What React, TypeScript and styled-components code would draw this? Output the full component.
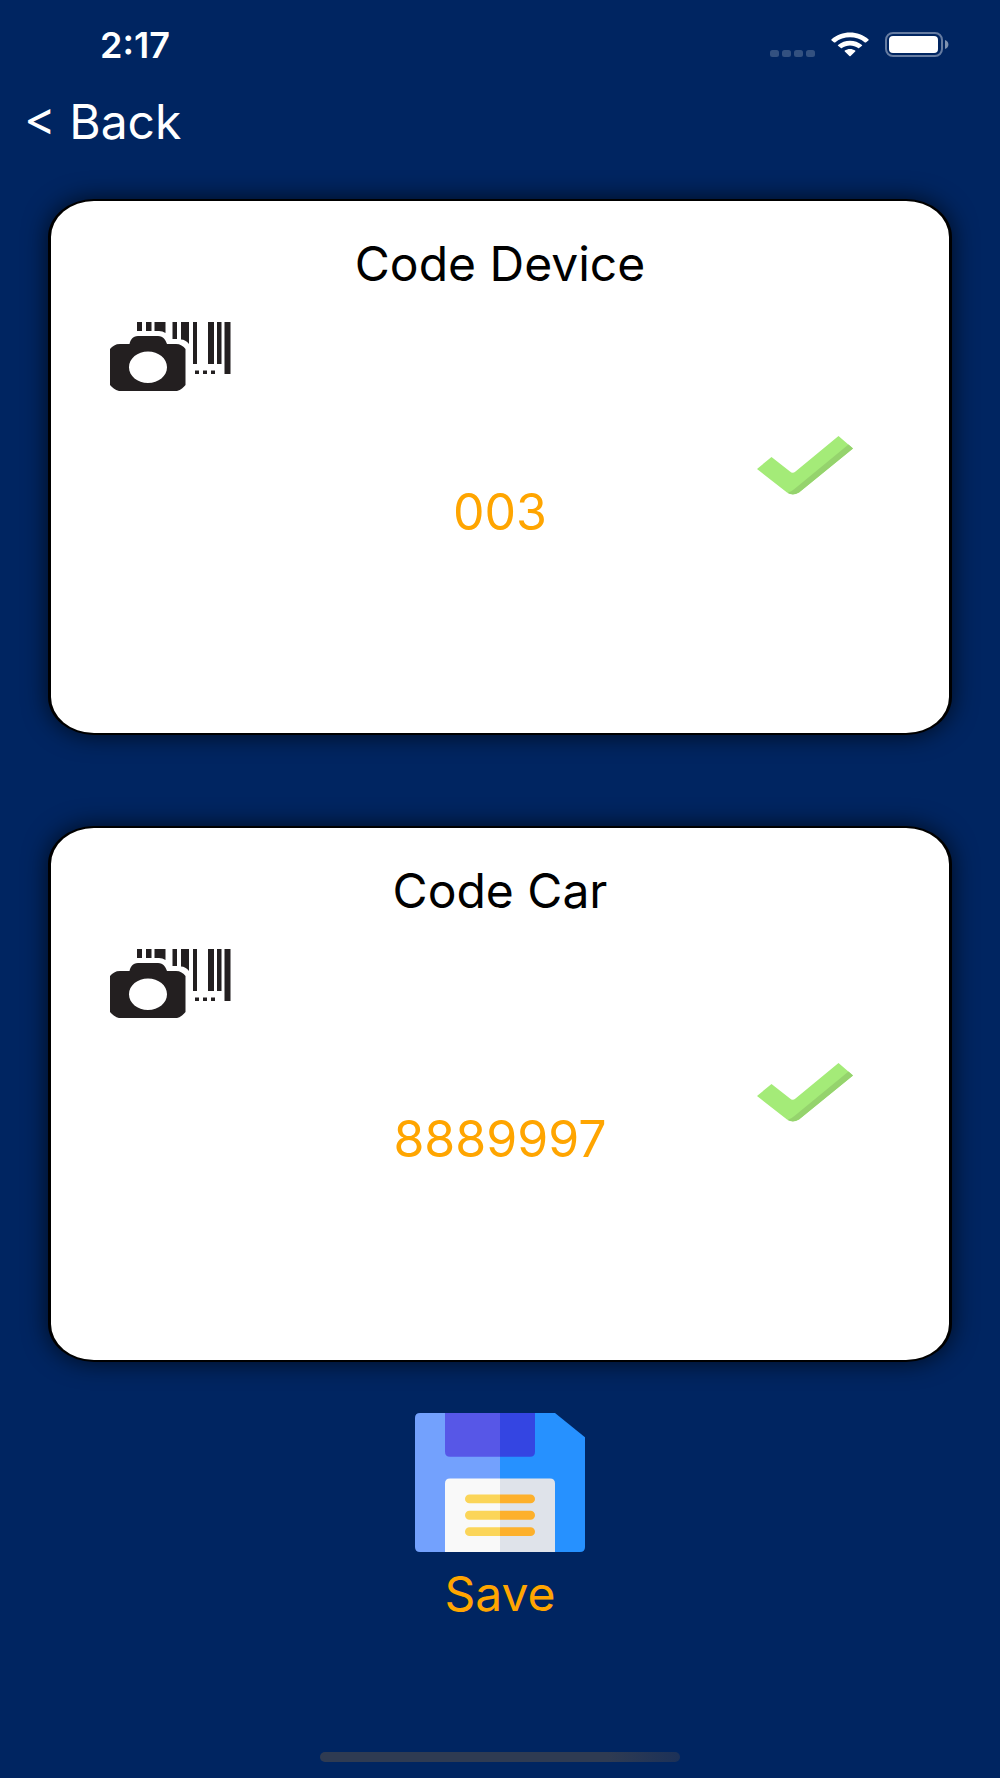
import React from "react";
import styled, { createGlobalStyle } from "styled-components";

export default function App() {
  return (
    <>
      <GlobalStyle />
      <Screen>
        <StatusBar>
          <Clock>2:17</Clock>
          <StatusIcons>
            <SignalIcon />
            <WifiIcon />
            <BatteryIcon />
          </StatusIcons>
        </StatusBar>
        <Header>
          <BackButton type="button">&lt; Back</BackButton>
        </Header>
        <Cards>
          <CodeCard title="Code Device" value="003" />
          <CodeCard title="Code Car" value="8889997" />
        </Cards>
        <SaveButton type="button">
          <SaveIcon />
          Save
        </SaveButton>
        <HomeIndicator />
      </Screen>
    </>
  );
}

function CodeCard({ title, value }: { title: string; value: string }) {
  return (
    <Card>
      <CardTitle>{title}</CardTitle>
      <ScanButton type="button" aria-label={`Scan ${title}`}>
        <ScanIcon />
      </ScanButton>
      <ResultRow>
        <CodeValue>{value}</CodeValue>
        <CheckIcon />
      </ResultRow>
    </Card>
  );
}

function SignalIcon() {
  return (
    <svg width="45" height="25" viewBox="0 0 45 25" fill="#335180">
      <rect x="0" y="18" width="9" height="7" rx="2.5" />
      <rect x="12" y="18" width="9" height="7" rx="2.5" />
      <rect x="24" y="18" width="9" height="7" rx="2.5" />
      <rect x="36" y="18" width="9" height="7" rx="2.5" />
    </svg>
  );
}

function WifiIcon() {
  return (
    <svg width="38" height="25" viewBox="0 0 38 25" fill="#fff">
      <path d="M0.4 7.4C10.5-1.9 27.5-1.9 37.6 7.4Q38 7.8 37.6 8.2L34.9 10.4Q34.4 10.8 33.9 10.4C25.5 3.600 12.5 3.600 4.1 10.4Q3.6 10.8 3.1 10.4L0.4 8.2Q0 7.8 0.4 7.4Z" />
      <path d="M7 13C13.5 7.2 24.5 7.2 31 13Q31.4 13.4 31 13.8L28.1 16.1Q27.6 16.5 27.1 16.1C22.5 12.600 15.5 12.600 10.9 16.1Q10.4 16.5 9.9 16.1L7 13.8Q6.6 13.4 7 13Z" />
      <path d="M13.8 18.6C16.8 16.4 21.2 16.4 24.2 18.6Q24.7 19 24.2 19.4L19.6 23.9Q19 24.4 18.4 23.9L13.8 19.4Q13.3 19 13.8 18.6Z" />
    </svg>
  );
}

function BatteryIcon() {
  return (
    <svg width="64" height="25" viewBox="0 0 64 25">
      <rect x="1" y="1" width="56" height="23" rx="7" fill="none" stroke="#667ca1" strokeWidth="2" />
      <rect x="4" y="4" width="49" height="17" rx="4" fill="#fff" />
      <path d="M60 8C64.5 9.5 64.5 15.5 60 17Z" fill="#7f92b0" />
    </svg>
  );
}

function ScanIcon() {
  return (
    <svg width="121" height="70" viewBox="0 0 121 70" fill="#231f20">
      <path d="M27 0H32V9H27ZM36 0H41.5V9H36ZM44.5 0H55.5V11Q52.5 9 49 9H44.5ZM62.5 0H67V17H62.5ZM71 0H79V22Q75.5 17.5 71 17.5ZM83 0H87V42H83ZM98 0H104V42H98ZM107 0H111.5V42H107ZM114.5 0H120.5V52H114.5Z" />
      <path d="M85 48.5H89V52H85ZM93 48.5H97V52H93ZM101 48.5H105V52H101Z" />
      <path
        fillRule="evenodd"
        d="M19.5 22C20.5 18 22.5 14 28 14H48C53.5 14 55.500 18 57 22H66C70 22 73.500 24 75.500 27V63C73.500 65.500 71 68 67 69H9C5 68 2 65.500 0 63V27C2.500 24 5.500 22 10 22ZM38 29.500C27.500 29.500 19 36.500 19 45.200S27.500 61 38 61 57 54 57 45.200 48.500 29.500 38 29.500Z"
      />
    </svg>
  );
}

function CheckIcon() {
  return (
    <svg width="96" height="59" viewBox="0 0 96 59" role="img" aria-label="Scanned">
      <path
        fill="#a4eb78"
        d="M0 33L14.5 21L33 35.5Q35.5 38 38.5 35.5L81.5 0L96 12.5L42 56.5Q36 60 30 56.5Z"
      />
      <path fill="#95d36d" d="M91.5 8.5L96 12.5L42 56.5Q36 60 30.5 57Q34 56 38 52.5Z" />
    </svg>
  );
}

function SaveIcon() {
  return (
    <svg width="170" height="139" viewBox="0 0 170 140" preserveAspectRatio="none">
      <path fill="#73a1fd" d="M5 0H85V140H5Q0 140 0 135V5Q0 0 5 0Z" />
      <path fill="#2691ff" d="M85 0H140L170 24.5V135Q170 140 165 140H85Z" />
      <path fill="#5757e7" d="M30 0H85V44H35Q30 44 30 39Z" />
      <path fill="#3445e2" d="M85 0H120V39Q120 44 115 44H85Z" />
      <path fill="#f9f9f9" d="M35 66H85V140H30V71Q30 66 35 66Z" />
      <path fill="#dfe3ea" d="M85 66H135Q140 66 140 71V140H85Z" />
      <path
        fill="#fbd559"
        d="M85 82V91H54.5A4.5 4.5 0 0 1 54.5 82ZM85 98.5V107.5H54.5A4.5 4.5 0 0 1 54.5 98.5ZM85 115V124H54.5A4.5 4.5 0 0 1 54.5 115Z"
      />
      <path
        fill="#fdb02b"
        d="M85 82H115.5A4.5 4.5 0 0 1 115.5 91H85ZM85 98.5H115.5A4.5 4.5 0 0 1 115.5 107.5H85ZM85 115H115.5A4.5 4.5 0 0 1 115.5 124H85Z"
      />
    </svg>
  );
}

const GlobalStyle = createGlobalStyle`
  * {
    box-sizing: border-box;
  }
  body {
    margin: 0;
    background: #002561;
    font-family: Inter, "Liberation Sans", sans-serif;
  }
  svg {
    display: block;
  }
`;

const Screen = styled.div`
  display: flex;
  flex-direction: column;
  min-height: 100vh;
  padding-bottom: 16px;
`;

const StatusBar = styled.div`
  display: flex;
  align-items: center;
  justify-content: space-between;
  height: 89px;
  padding: 0 51px 0 100px;
`;

const Clock = styled.span`
  color: #fff;
  font-size: 36px;
  font-weight: 600;
  line-height: 40px;
`;

const StatusIcons = styled.div`
  display: flex;
  gap: 16px;
`;

const Header = styled.header`
  padding: 5px 24px 49px;
`;

const PlainButton = styled.button`
  padding: 0;
  border: 0;
  background: none;
  font-family: inherit;
  font-size: 48px;
  line-height: 56px;
  cursor: pointer;
`;

const BackButton = styled(PlainButton)`
  display: block;
  color: #fff;
`;

const Cards = styled.main`
  display: flex;
  flex-direction: column;
  gap: 91px;
  padding: 0 48px;
`;

const Card = styled.section`
  min-height: 536px;
  padding-top: 35px;
  border: solid #000;
  border-width: 2px 3px;
  border-radius: 46px / 38px;
  background: #fff;
  box-shadow: 0 0 24px rgba(0, 0, 0, 0.7);
`;

const CardTitle = styled.h2`
  margin: 0;
  color: #000;
  font-size: 48px;
  font-weight: 400;
  line-height: 56px;
  text-align: center;
`;

const ScanButton = styled(PlainButton)`
  display: block;
  margin: 30px 0 44px 59px;
`;

const ResultRow = styled.div`
  display: grid;
  grid-template-columns: 1fr auto 1fr;
  align-items: start;
  padding: 0 96px;

  svg {
    justify-self: end;
  }
`;

const CodeValue = styled.output`
  grid-column: 2;
  margin-top: 48px;
  color: #ffa500;
  font-size: 50px;
  line-height: 56px;
`;

const SaveButton = styled(PlainButton)`
  display: flex;
  flex-direction: column;
  align-items: center;
  gap: 14px;
  align-self: center;
  margin: 51px 0;
  color: #ffa500;
`;

const HomeIndicator = styled.div`
  align-self: center;
  width: 36%;
  height: 10px;
  margin-top: auto;
  border-radius: 5px;
  background: linear-gradient(to right, #2f3b52 80%, #1c3158);
`;
